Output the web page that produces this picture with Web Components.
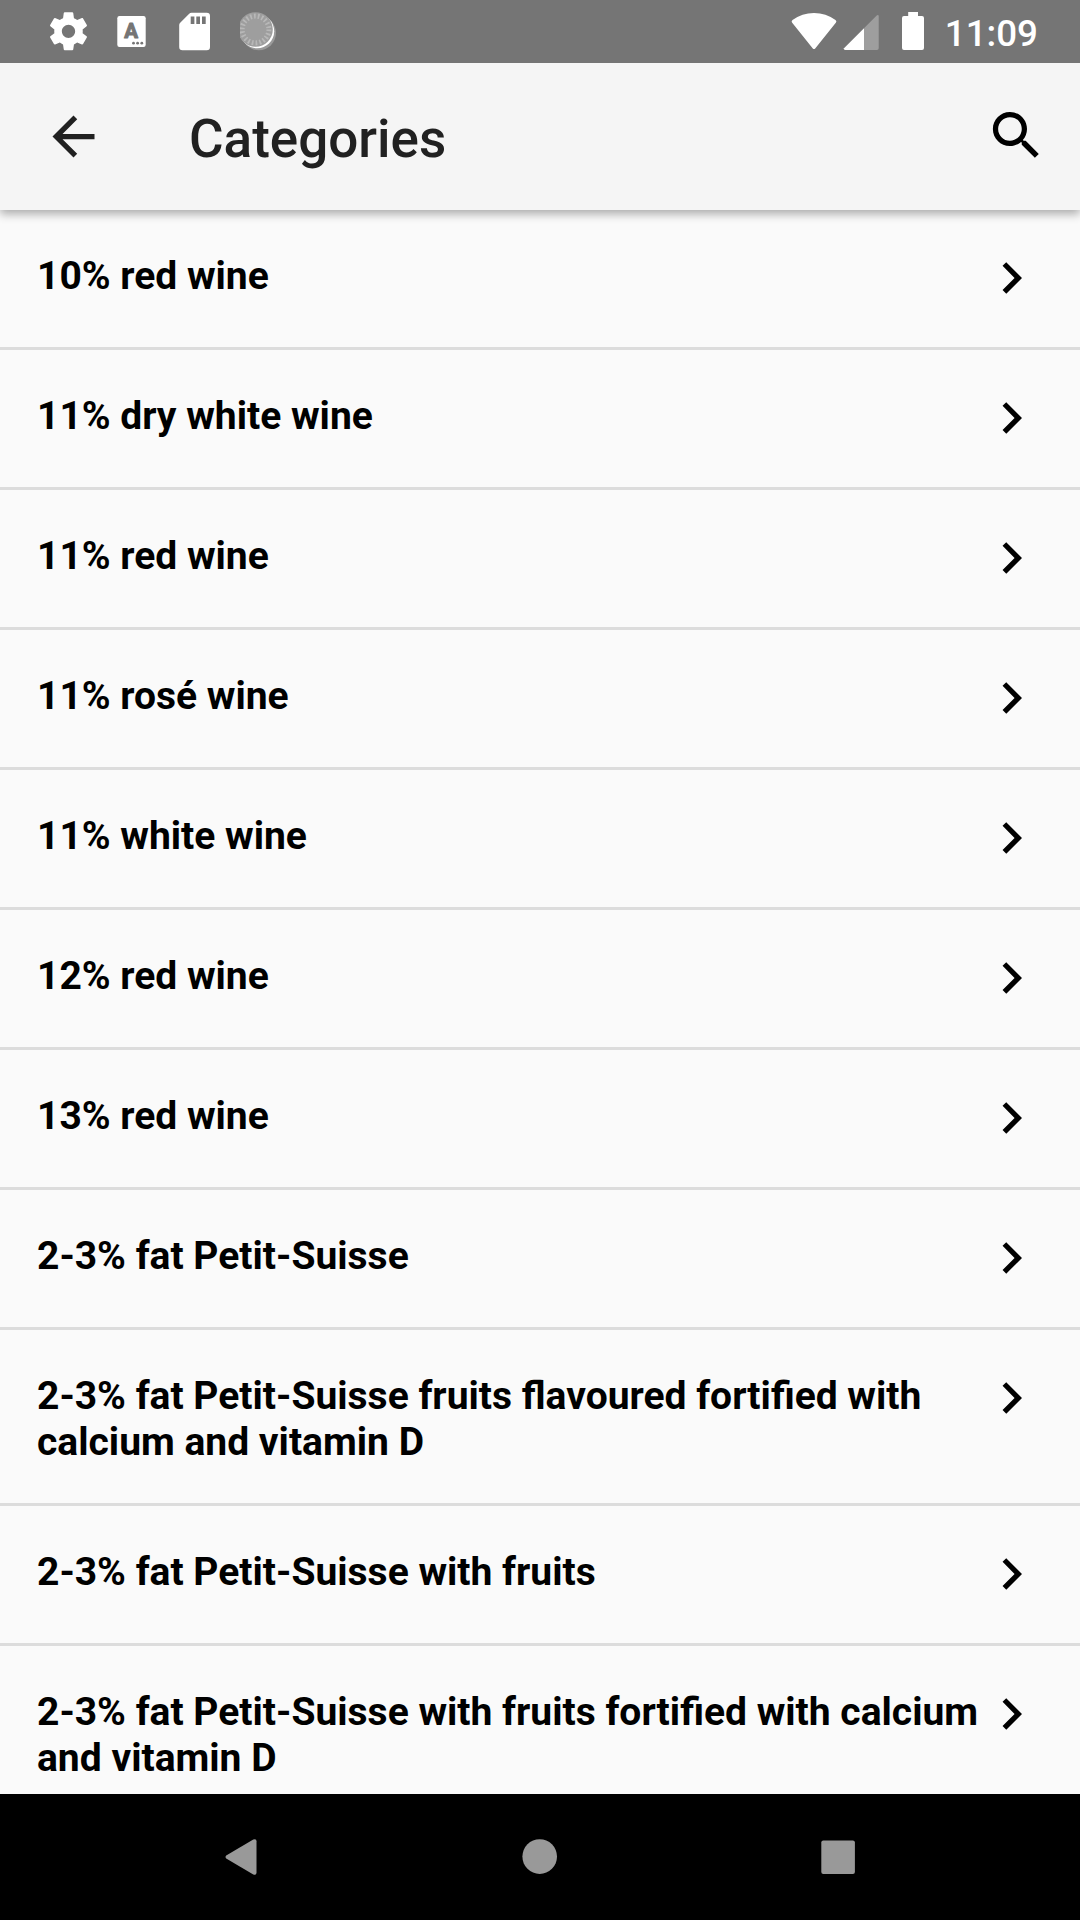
<!DOCTYPE html>
<html lang="en">
<head>
<meta charset="utf-8">
<title>Categories</title>
<style>
html,body{margin:0;padding:0;background:#fafafa}
body{font-family:Roboto,"Noto Sans",sans-serif;width:1080px;height:1920px;overflow:hidden}
</style>
</head>
<body>
<app-screen>
  <status-bar slot="status" time="11:09"></status-bar>
  <app-bar slot="bar">Categories</app-bar>
  <category-row>10% red wine</category-row>
  <category-row>11% dry white wine</category-row>
  <category-row>11% red wine</category-row>
  <category-row>11% rosé wine</category-row>
  <category-row>11% white wine</category-row>
  <category-row>12% red wine</category-row>
  <category-row>13% red wine</category-row>
  <category-row>2-3% fat Petit-Suisse</category-row>
  <category-row>2-3% fat Petit-Suisse fruits flavoured fortified with calcium and vitamin D</category-row>
  <category-row>2-3% fat Petit-Suisse with fruits</category-row>
  <category-row>2-3% fat Petit-Suisse with fruits fortified with calcium and vitamin D</category-row>
  <nav-bar slot="nav"></nav-bar>
</app-screen>
<script>
function define(name, html) {
  customElements.define(name, class extends HTMLElement {
    constructor() {
      super();
      this.attachShadow({mode: 'open'}).innerHTML = html;
    }
    connectedCallback() {
      const t = this.shadowRoot.querySelector('.time');
      if (t) t.textContent = this.getAttribute('time');
    }
  });
}

define('app-screen', `
<style>
:host{display:flex;flex-direction:column;width:1080px;height:1920px;background:#fafafa;overflow:hidden}
main{flex:1;min-height:0;overflow:hidden;display:flex;flex-direction:column}
</style>
<slot name="status"></slot><slot name="bar"></slot>
<main><slot></slot></main>
<slot name="nav"></slot>`);

define('status-bar', `
<style>
:host{display:flex;justify-content:space-between;height:63px;flex:none;background:#757575;color:#fff;padding:0 42px 0 48px;box-sizing:border-box;position:relative;z-index:2}
.group{display:flex;height:63px}
svg{display:block;height:63px;flex:none}
.left{gap:22px}
.time{font-size:36.75px;font-weight:500;line-height:43px;padding-top:12px;margin-left:21px}
</style>
<div class="group left">
  <svg width="42" viewBox="48 0 42 63"><path transform="translate(45.7 8.5) scale(1.9)" fill="#fff" d="M19.43 12.98c.04-.32.07-.64.07-.98s-.03-.66-.07-.98l2.11-1.65c.19-.15.24-.42.12-.64l-2-3.46c-.12-.22-.39-.3-.61-.22l-2.49 1c-.52-.4-1.08-.73-1.69-.98l-.38-2.65C14.46 2.18 14.25 2 14 2h-4c-.25 0-.46.18-.49.42l-.38 2.65c-.61.25-1.17.59-1.69.98l-2.49-1c-.23-.09-.49 0-.61.22l-2 3.46c-.13.22-.07.49.12.64l2.11 1.65c-.04.32-.07.65-.07.98s.03.66.07.98l-2.11 1.65c-.19.15-.24.42-.12.64l2 3.46c.12.22.39.3.61.22l2.49-1c.52.4 1.08.73 1.69.98l.38 2.65c.03.24.24.42.49.42h4c.25 0 .46-.18.49-.42l.38-2.65c.61-.25 1.17-.59 1.69-.98l2.49 1c.23.09.49 0 .61-.22l2-3.46c.12-.22.07-.49-.12-.64l-2.11-1.65zM12 15.5c-1.93 0-3.5-1.57-3.5-3.5s1.57-3.5 3.5-3.5 3.5 1.57 3.5 3.5-1.57 3.5-3.5 3.5z"/></svg>
  <svg width="42" viewBox="112 0 42 63"><rect x="117.3" y="16" width="28.4" height="31" rx="2.2" fill="#fff"/><text x="131.2" y="38.2" text-anchor="middle" font-family="Roboto" font-weight="700" font-size="20.5" fill="#757575" stroke="#757575" stroke-width="1" stroke-linejoin="round">A</text><g fill="#757575"><circle cx="133.5" cy="43.2" r="1.4"/><circle cx="137.6" cy="43.2" r="1.4"/><circle cx="141.8" cy="43.2" r="1.4"/></g></svg>
  <svg width="42" viewBox="176 0 42 63"><path fill="#fff" d="M191.5 12.7h15.2q3.3 0 3.3 3.3v31q0 3.3-3.3 3.3h-24.2q-3.3 0-3.3-3.3V25q0-1.3 1-2.3l9-9q1-1 2.3-1z"/><path fill="#757575" d="M190.7 16.4h3.7V24h-3.7zM196.3 16.4h3.7V24h-3.7zM202 16.4h3.7V24H202z"/></svg>
  <svg width="42" viewBox="240 0 42 63"><circle cx="258.8" cy="33" r="17.2" fill="#9a9a9a"/><circle cx="257.1" cy="31.2" r="17.1" fill="#fff"/><circle cx="255.5" cy="29.5" r="17.3" fill="#9e9e9e"/><circle cx="255.5" cy="29.5" r="13.4" fill="none" stroke="#b8b8b8" stroke-width="5" stroke-dasharray="1.7 2.127"/></svg>
</div>
<div class="group">
  <svg width="48" viewBox="790 0 48 63"><path fill="#fff" d="M792 22.6q-1-1.4.5-2.5Q802 13 814 13t21.500 7.100q1.500 1.100.500 2.500L815.200 48.400q-1.200 1.400-2.400 0z"/></svg>
  <svg width="38" viewBox="842 0 38 63" style="margin-left:4px"><path fill="#9e9e9e" d="M864 28.200L876.700 15.500q1-1 2 0v32.800q0 1.700-1.700 1.700H864z"/><path fill="#fff" d="M864 28.200V50H845.300q-2 0-1.300-1.800z"/></svg>
  <svg width="22" viewBox="902 0 22 63" style="margin-left:22px"><path fill="#fff" d="M908.200 12h9.800v4h4q2 0 2 2v30q0 2-2 2h-18q-2 0-2-2V18q0-2 2-2h4.200z"/></svg>
  <span class="time"></span>
</div>`);

define('app-bar', `
<style>
:host{display:flex;align-items:center;height:147px;flex:none;box-sizing:border-box;background:#f5f5f5;color:#212121;padding:0 32px 0 42px;z-index:1;box-shadow:0 4px 9px 0 rgba(0,0,0,.32)}
svg{display:block;width:63px;height:63px;flex:none}
h1{margin:0;padding:5px 0 0 84px;flex:1;font-size:53px;font-weight:500;line-height:62px}
.search{margin-bottom:3px;color:#000}
</style>
<svg viewBox="0 0 24 24"><path fill="currentColor" d="M20 11H7.830l5.590-5.590L12 4l-8 8 8 8 1.410-1.410L7.830 13H20v-2z"/></svg>
<h1><slot></slot></h1>
<svg class="search" viewBox="0 0 24 24"><path fill="currentColor" d="M15.500 14h-.790l-.280-.270C15.410 12.590 16 11.110 16 9.500 16 5.910 13.090 3 9.500 3S3 5.910 3 9.500 5.910 16 9.500 16c1.610 0 3.090-.590 4.230-1.570l.270.280v.790l5 4.990L20.490 19l-4.990-5zm-6 0C7.010 14 5 11.990 5 9.500S7.010 5 9.500 5 14 7.010 14 9.500 11.990 14 9.500 14z"/></svg>`);

define('category-row', `
<style>
:host{display:flex;align-items:flex-start;flex:none;padding:36px 37px 37px 37px;border-bottom:3px solid #dcdcdc;color:#000}
.label{flex:1;padding:7px 0 1px;font-size:39px;font-weight:700;line-height:46px}
svg{display:block;width:63px;height:63px;flex:none;margin-bottom:1px}
</style>
<span class="label"><slot></slot></span>
<svg viewBox="0 -.15 24 24"><path d="M10 6L8.590 7.410 13.170 12l-4.580 4.590L10 18l6-6z"/></svg>`);

define('nav-bar', `
<style>
:host{display:flex;align-items:center;justify-content:space-between;height:126px;flex:none;background:#000;box-sizing:border-box;padding:0 223px}
svg{display:block;width:36px;height:38px}
</style>
<svg viewBox="223 1838 36 38"><path fill="#999" d="M226.200 1855.500L253.300 1839.500q3.200-1.200 3.200 1.800v31.400q0 3-3.200 1.800L226.200 1858.500q-1.400-1.500 0-3z"/></svg>
<svg viewBox="522 1838 36 38"><circle cx="539.700" cy="1856.600" r="17.300" fill="#999"/></svg>
<svg viewBox="821 1838 36 38"><rect x="821.300" y="1840.400" width="33.600" height="33.600" rx="2" fill="#999"/></svg>`);
</script>
</body>
</html>
